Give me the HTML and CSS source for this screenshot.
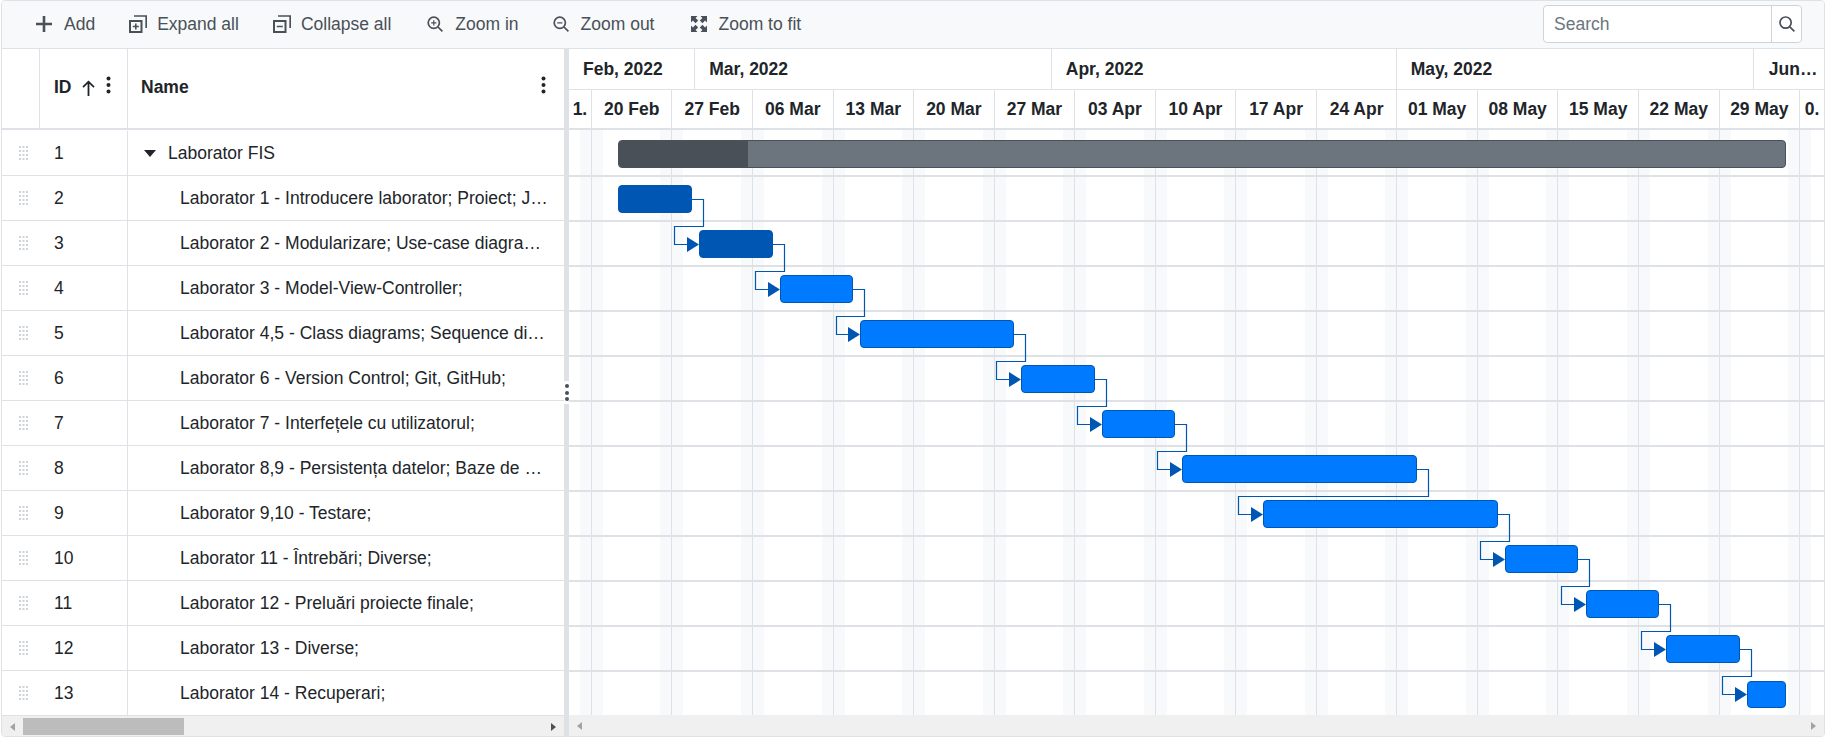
FILE: index.html
```html
<!DOCTYPE html>
<html lang="en">
<head>
<meta charset="utf-8">
<title>Laborator FIS</title>
<link rel="stylesheet" href="styles.css">
</head>
<body>

<svg class="defs" width="0" height="0">
	<symbol id="drag" viewBox="0 0 9 14">
		<path d="M0 0h2v2H0zM3.5 0h2v2h-2zM7 0h2v2H7zM0 4h2v2H0zM3.5 4h2v2h-2zM7 4h2v2H7zM0 8h2v2H0zM3.5 8h2v2h-2zM7 8h2v2H7zM0 12h2v2H0zM3.5 12h2v2h-2zM7 12h2v2H7z"/>
	</symbol>
	<symbol id="kebab" viewBox="0 0 5 18">
		<circle cx="2.5" cy="2.5" r="2"/><circle cx="2.5" cy="9" r="2"/><circle cx="2.5" cy="15.5" r="2"/>
	</symbol>
</svg>

<div class="gantt">

	<div class="toolbar">
		<div class="tool">
			<svg class="icon" viewBox="0 0 16 16"><path d="M6.7 0h2.6v6.7H16v2.6H9.3V16H6.7V9.3H0V6.7h6.7z"/></svg>
			<span>Add</span>
		</div>
		<div class="tool">
			<svg class="icon wide" viewBox="0 0 18 18"><path class="line" d="M5 1h12.2v12"/><rect class="box" x="1" y="6" width="11.5" height="11"/><path d="M6 8.5h1.6v2.2h2.2v1.6H7.6v2.2H6v-2.2H3.8v-1.6H6z"/></svg>
			<span>Expand all</span>
		</div>
		<div class="tool">
			<svg class="icon wide" viewBox="0 0 18 18"><path class="line" d="M5 1h12.2v12"/><rect class="box" x="1" y="6" width="11.5" height="11"/><path d="M3.8 10.7h6v1.6h-6z"/></svg>
			<span>Collapse all</span>
		</div>
		<div class="tool spaced">
			<svg class="icon" viewBox="0 0 16 16"><circle class="ring" cx="6.8" cy="6.8" r="5.6"/><path class="ring" d="M11 11l4.4 4.4"/><path d="M6.2 4.2h1.2v2h2v1.2h-2v2H6.2v-2h-2V6.2h2z"/></svg>
			<span>Zoom in</span>
		</div>
		<div class="tool">
			<svg class="icon" viewBox="0 0 16 16"><circle class="ring" cx="6.8" cy="6.8" r="5.6"/><path class="ring" d="M11 11l4.4 4.4"/><path d="M4.2 6.2h5.2v1.2H4.2z"/></svg>
			<span>Zoom out</span>
		</div>
		<div class="tool spaced">
			<svg class="icon" viewBox="0 0 16 16"><path d="M0 0h6.5L4.6 1.9l2.6 2.6-2.7 2.7-2.6-2.6L0 6.5zM16 0v6.5l-1.9-1.9-2.6 2.6-2.7-2.7 2.6-2.6L9.5 0zM16 16H9.5l1.9-1.9-2.6-2.6 2.7-2.7 2.6 2.6L16 9.5zM0 16V9.5l1.9 1.9 2.6-2.6 2.7 2.7-2.6 2.6L6.5 16z"/></svg>
			<span>Zoom to fit</span>
		</div>
		<div class="search">
			<input type="text" placeholder="Search">
			<button type="button">
				<svg class="icon" viewBox="0 0 16 16"><circle class="ring" cx="6.6" cy="6.6" r="5.6"/><path class="ring" d="M10.8 10.8l4.6 4.6"/></svg>
			</button>
		</div>
	</div>

	<div class="panels">

		<div class="grid">
			<div class="grid-head">
				<div class="cell-drag"></div>
				<div class="cell-id">
					<span>ID</span>
					<svg class="sort" viewBox="0 0 13 16"><path d="M6.5 0.5L12.6 6.6l-1.2 1.2-4-4V16H5.6V3.8l-4 4L.4 6.6z"/></svg>
					<svg class="kebab"><use href="#kebab"/></svg>
				</div>
				<div class="cell-name">
					<span>Name</span>
					<svg class="kebab"><use href="#kebab"/></svg>
				</div>
			</div>
			<div class="grid-rows">
				<div class="row">
					<div class="cell-drag"><svg class="drag"><use href="#drag"/></svg></div>
					<div class="cell-id">1</div>
					<div class="cell-name parent"><i class="caret"></i><span class="label">Laborator FIS</span></div>
				</div>
				<div class="row">
					<div class="cell-drag"><svg class="drag"><use href="#drag"/></svg></div>
					<div class="cell-id">2</div>
					<div class="cell-name child"><span class="label">Laborator 1 - Introducere laborator; Proiect; Java;</span></div>
				</div>
				<div class="row">
					<div class="cell-drag"><svg class="drag"><use href="#drag"/></svg></div>
					<div class="cell-id">3</div>
					<div class="cell-name child"><span class="label">Laborator 2 - Modularizare; Use-case diagrams;</span></div>
				</div>
				<div class="row">
					<div class="cell-drag"><svg class="drag"><use href="#drag"/></svg></div>
					<div class="cell-id">4</div>
					<div class="cell-name child"><span class="label">Laborator 3 - Model-View-Controller;</span></div>
				</div>
				<div class="row">
					<div class="cell-drag"><svg class="drag"><use href="#drag"/></svg></div>
					<div class="cell-id">5</div>
					<div class="cell-name child"><span class="label">Laborator 4,5 - Class diagrams; Sequence diagrams;</span></div>
				</div>
				<div class="row">
					<div class="cell-drag"><svg class="drag"><use href="#drag"/></svg></div>
					<div class="cell-id">6</div>
					<div class="cell-name child"><span class="label">Laborator 6 - Version Control; Git, GitHub;</span></div>
				</div>
				<div class="row">
					<div class="cell-drag"><svg class="drag"><use href="#drag"/></svg></div>
					<div class="cell-id">7</div>
					<div class="cell-name child"><span class="label">Laborator 7 - Interfețele cu utilizatorul;</span></div>
				</div>
				<div class="row">
					<div class="cell-drag"><svg class="drag"><use href="#drag"/></svg></div>
					<div class="cell-id">8</div>
					<div class="cell-name child"><span class="label">Laborator 8,9 - Persistența datelor; Baze de date;</span></div>
				</div>
				<div class="row">
					<div class="cell-drag"><svg class="drag"><use href="#drag"/></svg></div>
					<div class="cell-id">9</div>
					<div class="cell-name child"><span class="label">Laborator 9,10 - Testare;</span></div>
				</div>
				<div class="row">
					<div class="cell-drag"><svg class="drag"><use href="#drag"/></svg></div>
					<div class="cell-id">10</div>
					<div class="cell-name child"><span class="label">Laborator 11 - Întrebări; Diverse;</span></div>
				</div>
				<div class="row">
					<div class="cell-drag"><svg class="drag"><use href="#drag"/></svg></div>
					<div class="cell-id">11</div>
					<div class="cell-name child"><span class="label">Laborator 12 - Preluări proiecte finale;</span></div>
				</div>
				<div class="row">
					<div class="cell-drag"><svg class="drag"><use href="#drag"/></svg></div>
					<div class="cell-id">12</div>
					<div class="cell-name child"><span class="label">Laborator 13 - Diverse;</span></div>
				</div>
				<div class="row">
					<div class="cell-drag"><svg class="drag"><use href="#drag"/></svg></div>
					<div class="cell-id">13</div>
					<div class="cell-name child"><span class="label">Laborator 14 - Recuperari;</span></div>
				</div>
			</div>
			<div class="scrollbar grid-scroll">
				<span class="arrow left"></span>
				<span class="thumb"></span>
				<span class="arrow right dark"></span>
			</div>
		</div>

		<div class="splitter"><div class="handle"><i></i><i></i><i></i></div></div>

		<div class="chart">
			<div class="months">
				<div class="month" style="width:126.25px">Feb, 2022</div>
				<div class="month" style="width:356.5px">Mar, 2022</div>
				<div class="month" style="width:345px">Apr, 2022</div>
				<div class="month" style="width:357px">May, 2022</div>
				<div class="month last">Jun, 2022</div>
			</div>
			<div class="weeks">
				<div class="week first">1.</div>
				<div class="week">20 Feb</div>
				<div class="week">27 Feb</div>
				<div class="week">06 Mar</div>
				<div class="week">13 Mar</div>
				<div class="week">20 Mar</div>
				<div class="week">27 Mar</div>
				<div class="week">03 Apr</div>
				<div class="week">10 Apr</div>
				<div class="week">17 Apr</div>
				<div class="week">24 Apr</div>
				<div class="week">01 May</div>
				<div class="week">08 May</div>
				<div class="week">15 May</div>
				<div class="week">22 May</div>
				<div class="week">29 May</div>
				<div class="week last">0.</div>
			</div>
			<div class="chart-body">
				<div class="cols">
					<div class="col first"></div>
					<div class="col"></div><div class="col"></div><div class="col"></div><div class="col"></div>
					<div class="col"></div><div class="col"></div><div class="col"></div><div class="col"></div>
					<div class="col"></div><div class="col"></div><div class="col"></div><div class="col"></div>
					<div class="col"></div><div class="col"></div><div class="col"></div>
					<div class="col last"></div>
				</div>
				<div class="lane"><div class="bar summary" style="left:49px;width:1168px"><div class="progress" style="width:129px"></div></div></div>
				<div class="lane"><div class="bar done" style="left:49px;width:74px"></div></div>
				<div class="lane"><div class="bar done" style="left:130px;width:74px"></div></div>
				<div class="lane"><div class="bar" style="left:211px;width:73px"></div></div>
				<div class="lane"><div class="bar" style="left:291px;width:154px"></div></div>
				<div class="lane"><div class="bar" style="left:452px;width:74px"></div></div>
				<div class="lane"><div class="bar" style="left:533px;width:73px"></div></div>
				<div class="lane"><div class="bar" style="left:613px;width:235px"></div></div>
				<div class="lane"><div class="bar" style="left:694px;width:235px"></div></div>
				<div class="lane"><div class="bar" style="left:936px;width:73px"></div></div>
				<div class="lane"><div class="bar" style="left:1017px;width:73px"></div></div>
				<div class="lane"><div class="bar" style="left:1097px;width:74px"></div></div>
				<div class="lane"><div class="bar tail" style="left:1178px;width:39px"></div></div>
				<svg class="links" width="1255" height="585">
					<path d="M123 69.5H134.5V96.5H105.5V114.5H118"/>
					<path d="M204 114.5H215.5V141.5H186.5V159.5H199"/>
					<path d="M284 159.5H295.5V186.5H267.5V204.5H279"/>
					<path d="M445 204.5H456.5V231.5H427.5V249.5H440"/>
					<path d="M526 249.5H537.5V276.5H508.5V294.5H521"/>
					<path d="M606 294.5H617.5V321.5H588.5V339.5H601"/>
					<path d="M848 339.5H859.5V366.5H669.5V384.5H682"/>
					<path d="M929 384.5H940.5V411.5H911.5V429.5H924"/>
					<path d="M1009 429.5H1020.5V456.5H992.5V474.5H1005"/>
					<path d="M1090 474.5H1101.5V501.5H1072.5V519.5H1085"/>
					<path d="M1171 519.5H1182.5V546.5H1153.5V564.5H1166"/>
					<polygon points="118,107 130,114.5 118,122"/>
					<polygon points="199,152 211,159.5 199,167"/>
					<polygon points="279,197 291,204.5 279,212"/>
					<polygon points="440,242 452,249.5 440,257"/>
					<polygon points="521,287 533,294.5 521,302"/>
					<polygon points="601,332 613,339.5 601,347"/>
					<polygon points="682,377 694,384.5 682,392"/>
					<polygon points="924,422 936,429.5 924,437"/>
					<polygon points="1005,467 1017,474.5 1005,482"/>
					<polygon points="1085,512 1097,519.5 1085,527"/>
					<polygon points="1166,557 1178,564.5 1166,572"/>
				</svg>
			</div>
			<div class="scrollbar">
				<span class="arrow left"></span>
				<span class="arrow right"></span>
			</div>
		</div>

	</div>
</div>

</body>
</html>
```

FILE: styles.css
```css
* { box-sizing:border-box; }

body { margin:0; font-family:"Liberation Sans", Arial, sans-serif; font-size:17.5px; color:#212529; background:#fff; }

.defs { position:absolute; }

.gantt { margin-left:1px; width:1824px; height:737px; border:1px solid #dee2e6; border-radius:4px; display:flex; flex-direction:column; overflow:hidden; }

/* toolbar */
.toolbar { height:48px; flex:none; display:flex; align-items:flex-start; gap:34px; padding:4px 22px 0 34px; background:#f8f9fa; border-bottom:1px solid #dee2e6; }
.tool { height:38px; display:flex; align-items:center; gap:12px; color:#495057; }
.tool.spaced { margin-left:2px; }
.icon { width:16px; height:16px; fill:#495057; flex:none; }
.icon.wide { width:18px; height:18px; margin-right:-2px; }
.icon .line { fill:none; stroke:#495057; stroke-width:1.7; }
.icon .box { fill:none; stroke:#495057; stroke-width:2; }
.icon .ring { fill:none; stroke:#495057; stroke-width:1.7; }

.search { margin-left:auto; width:259px; height:38px; display:flex; background:#fff; border:1px solid #ced4da; border-radius:4px; }
.search input { flex:1; min-width:0; border:0; outline:0; background:none; padding:0 10px; font:inherit; color:#495057; }
.search input::placeholder { color:#6c757d; opacity:1; }
.search button { width:30px; padding:0; border:0; border-left:1px solid #ced4da; background:none; display:flex; align-items:center; justify-content:center; }

.panels { flex:1; min-height:0; display:flex; }

/* left grid */
.grid { width:562px; flex:none; display:flex; flex-direction:column; }
.grid-head { height:81px; flex:none; display:flex; border-bottom:2px solid #dee2e6; font-weight:bold; }
.grid-rows { height:585px; flex:none; padding-top:1px; overflow:hidden; }
.row { height:45px; display:flex; border-bottom:1px solid #dee2e6; }

.cell-drag { width:38px; flex:none; display:flex; align-items:center; justify-content:center; padding-left:4px; }
.cell-id { width:88px; flex:none; display:flex; align-items:center; padding-left:14px; }
.cell-name { flex:1; min-width:0; display:flex; align-items:center; padding-right:14px; }
.grid-head .cell-drag { border-right:1px solid #dee2e6; }
.grid-head .cell-id { border-right:1px solid #dee2e6; padding-bottom:2px; }
.grid-head .cell-name { padding:0 18px 2px 13px; justify-content:space-between; }
.row .cell-id { border-right:1px solid #dee2e6; }

.drag { width:9px; height:14px; fill:#ced4da; }
.sort { width:13px; height:16px; fill:#212529; margin-left:10px; }
.kebab { width:5px; height:18px; fill:#212529; margin-bottom:5px; }
.cell-id .kebab { margin-left:11px; }

.parent { padding-left:16px; }
.child { padding-left:52px; }
.caret { width:0; height:0; flex:none; margin-right:12px; border-left:6.5px solid transparent; border-right:6.5px solid transparent; border-top:7px solid #212529; }
.label { overflow:hidden; white-space:nowrap; text-overflow:ellipsis; }

/* splitter */
.splitter { width:5px; flex:none; background:#dee2e6; display:flex; align-items:center; }
.handle { width:5px; height:23px; background:#fff; display:flex; flex-direction:column; align-items:center; justify-content:center; gap:2.2px; }
.handle i { width:4px; height:4px; border-radius:50%; background:#495057; }

/* timeline */
.chart { flex:1; min-width:0; display:flex; flex-direction:column; }
.months { height:41px; flex:none; display:flex; border-bottom:1px solid #dee2e6; font-weight:bold; }
.month { flex:none; display:flex; align-items:center; padding-left:14px; border-right:1px solid #dee2e6; white-space:nowrap; overflow:hidden; }
.month.last { flex:1; min-width:0; display:block; line-height:40px; padding:0 5px 0 15px; border-right:0; text-overflow:ellipsis; }
.weeks { height:40px; flex:none; display:flex; border-bottom:2px solid #dee2e6; font-weight:bold; }
.week { width:80.55px; flex:none; display:flex; align-items:center; justify-content:center; border-right:1px solid #dee2e6; white-space:nowrap; overflow:hidden; }
.week.first, .col.first { width:22.9px; }
.week.last, .col.last { flex:1; width:auto; border-right:0; }

.chart-body { height:585px; flex:none; padding-top:2px; position:relative; overflow:hidden; }
.cols { position:absolute; inset:0; display:flex; }
.col { width:80.55px; flex:none; border-right:1px solid #dee2e6; background:linear-gradient(to right, #f8f9fa 11px, transparent 11px, transparent calc(100% - 11px), #f8f9fa calc(100% - 11px)); }
.col.first { background:linear-gradient(to left, #f8f9fa 11px, transparent 11px); }
.col.last { background:linear-gradient(to right, #f8f9fa 11px, transparent 11px); }

.lane { height:45px; position:relative; border-bottom:2px solid #dee2e6; }
.bar { position:absolute; top:8px; height:28px; border:1px solid #0056b3; border-radius:4px; background:#007bff; overflow:hidden; }
.bar.done { background:#0056b3; }
.bar.tail { top:9px; height:27px; }
.bar.summary { background:#6c757d; border-color:#495057; }
.progress { height:100%; background:#495057; }

.links { position:absolute; left:0; top:0; pointer-events:none; }
.links path { fill:none; stroke:#0056b3; stroke-width:1.2; }
.links polygon { fill:#0056b3; }

/* scrollbars */
.scrollbar { height:21px; flex:none; display:flex; align-items:center; justify-content:space-between; padding:0 8px; background:#f0f0f0; }
.grid-scroll { height:22px; border-top:1px solid #dee2e6; position:relative; }
.thumb { position:absolute; left:21px; top:2px; width:161px; height:17px; background:#bcbcbc; }
.arrow { width:0; height:0; border-top:4.5px solid transparent; border-bottom:4.5px solid transparent; }
.arrow.left { border-right:5px solid #a3a3a3; }
.arrow.right { border-left:5px solid #a3a3a3; }
.arrow.right.dark { border-left-color:#505050; }
```
